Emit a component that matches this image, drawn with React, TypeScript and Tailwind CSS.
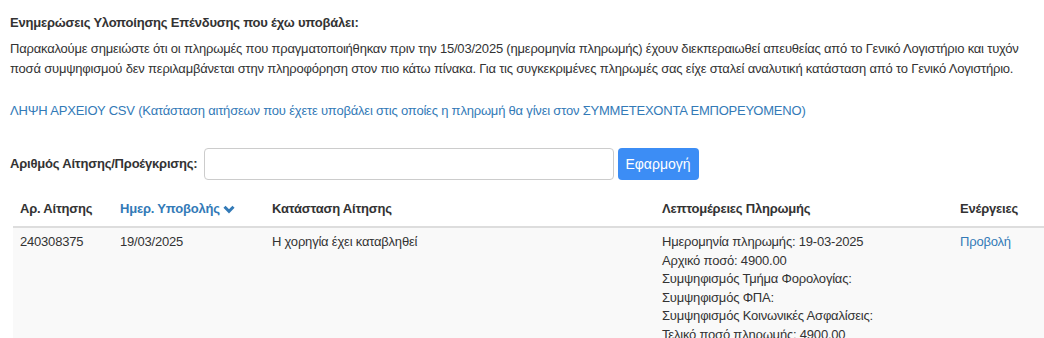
const details = [
  'Ημερομηνία πληρωμής: 19-03-2025',
  'Αρχικό ποσό: 4900.00',
  'Συμψηφισμός Τμήμα Φορολογίας:',
  'Συμψηφισμός ΦΠΑ:',
  'Συμψηφισμός Κοινωνικές Ασφαλίσεις:',
  'Τελικό ποσό πληρωμής: 4900.00',
];

function ChevronDown() {
  return (
    <svg width="12" height="9" viewBox="0 0 12 9" className="ml-[3px] mt-[1px]">
      <polyline points="1.5,1.8 6,6.3 10.5,1.8" fill="none" stroke="currentColor" strokeWidth="3" strokeLinecap="butt" strokeLinejoin="miter" />
    </svg>
  );
}

export default function App() {
  return (
    <div className="h-[338px] overflow-hidden bg-white text-[13px] leading-[20px] tracking-[-0.2px] text-[#333] font-['Liberation_Sans',Arial,sans-serif]">
      <div className="pl-[10px] pt-[13px]">
        <h4 className="font-bold text-[13px] leading-[20px]">
          Ενημερώσεις Υλοποίησης Επένδυσης που έχω υποβάλει:
        </h4>
        <p className="mt-[6px] pr-[14px]">
          Παρακαλούμε σημειώστε ότι οι πληρωμές που πραγματοποιήθηκαν πριν την 15/03/2025 (ημερομηνία πληρωμής) έχουν διεκπεραιωθεί απευθείας από το Γενικό Λογιστήριο και τυχόν
          ποσά συμψηφισμού δεν περιλαμβάνεται στην πληροφόρηση στον πιο κάτω πίνακα. Για τις συγκεκριμένες πληρωμές σας είχε σταλεί αναλυτική κατάσταση από το Γενικό Λογιστήριο.
        </p>
        <a href="#" className="block mt-[22px] text-[#337ab7]">
          ΛΗΨΗ ΑΡΧΕΙΟΥ CSV (Κατάσταση αιτήσεων που έχετε υποβάλει στις οποίες η πληρωμή θα γίνει στον ΣΥΜΜΕΤΕΧΟΝΤΑ ΕΜΠΟΡΕΥΟΜΕΝΟ)
        </a>
        <div className="mt-[27px] flex items-center">
          <label className="font-bold mr-[6px]">Αριθμός Αίτησης/Προέγκρισης:</label>
          <input className="w-[410px] h-[32px] border border-[#ccc] rounded-[4px] px-3 outline-none" />
          <button className="ml-[4px] h-[32px] w-[81px] rounded-[4px] bg-[#3c8df5] text-white text-[14px] tracking-normal">
            Εφαρμογή
          </button>
        </div>
      </div>
      <table className="ml-[13px] mt-[12px] w-[1031px] table-fixed border-collapse">
        <colgroup>
          <col className="w-[100px]" />
          <col className="w-[152px]" />
          <col className="w-[390px]" />
          <col className="w-[298px]" />
          <col className="w-[91px]" />
        </colgroup>
        <thead>
          <tr className="border-b-2 border-[#ddd]">
            <th className="text-left font-bold px-[7px] py-[8px] leading-[18px]">Αρ. Αίτησης</th>
            <th className="text-left font-bold px-[7px] py-[8px] leading-[18px] text-[#337ab7]">
              <span className="inline-flex items-center">
                Ημερ. Υποβολής
                <ChevronDown />
              </span>
            </th>
            <th className="text-left font-bold px-[7px] py-[8px] leading-[18px]">Κατάσταση Αίτησης</th>
            <th className="text-left font-bold px-[7px] py-[8px] leading-[18px]">Λεπτομέρειες Πληρωμής</th>
            <th className="text-left font-bold px-[7px] py-[8px] leading-[18px]">Ενέργειες</th>
          </tr>
        </thead>
        <tbody>
          <tr className="bg-[#f9f9f9] align-top">
            <td className="px-[7px] pt-[5px] pb-[6px] leading-[18.6px]">240308375</td>
            <td className="px-[7px] pt-[5px] pb-[6px] leading-[18.6px]">19/03/2025</td>
            <td className="px-[7px] pt-[5px] pb-[6px] leading-[18.6px]">Η χορηγία έχει καταβληθεί</td>
            <td className="px-[7px] pt-[5px] pb-[6px] leading-[18.6px]">
              {details.map((d) => (
                <div key={d}>{d}</div>
              ))}
            </td>
            <td className="px-[7px] pt-[5px] pb-[6px] leading-[18.6px]">
              <a href="#" className="text-[#337ab7]">Προβολή</a>
            </td>
          </tr>
        </tbody>
      </table>
    </div>
  );
}
